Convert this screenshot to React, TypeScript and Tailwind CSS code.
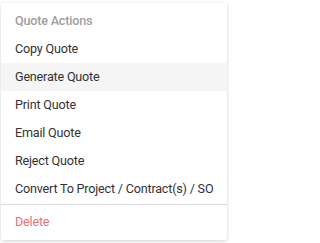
const actions = [
  "Copy Quote",
  "Generate Quote",
  "Print Quote",
  "Email Quote",
  "Reject Quote",
  "Convert To Project / Contract(s) / SO",
]

export default function App() {
  return (
    <div className="h-[243px] w-[229px] overflow-hidden bg-white pl-[1px] pt-[3px] font-['Roboto',sans-serif] tracking-[-0.2px]">
      <div className="w-[226px] rounded-[3px] bg-white py-[4px] shadow-[0_1px_4px_rgba(0,0,0,0.18)]">
        {/* Header */}
        <div className="flex h-[28px] items-center whitespace-nowrap px-[14px] text-[12.6px] font-medium text-[#a0a0a0]">
          Quote Actions
        </div>

        {actions.map((label) => (
          <div
            key={label}
            className={
              label === "Generate Quote"
                ? "flex h-[28px] items-center whitespace-nowrap bg-[#f5f5f5] px-[14px] text-[12.6px] text-[#333333]"
                : "flex h-[28px] items-center whitespace-nowrap px-[14px] text-[12.6px] text-[#333333]"
            }
          >
            {label}
          </div>
        ))}

        <div className="mb-[3px] mt-[1px] h-px bg-[#dcdcdc]" />

        <div className="flex h-[28px] items-center whitespace-nowrap px-[14px] text-[12.6px] text-[#e57373]">
          Delete
        </div>
      </div>
    </div>
  )
}
